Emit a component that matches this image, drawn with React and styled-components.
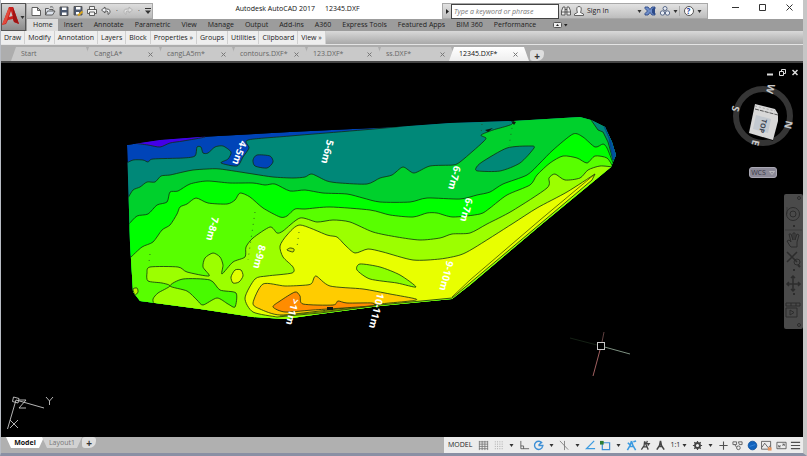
import React from "react";
import styled, { createGlobalStyle } from "styled-components";

const GlobalStyle = createGlobalStyle`
  * {
    box-sizing: border-box;
  }
  body {
    margin: 0;
    font-family: "Open Sans", "Noto Sans", sans-serif;
    font-size: 7px;
    line-height: 10px;
    color: #222222;
    background: #ffffff;
  }
  button, input {
    font: inherit;
    color: inherit;
    margin: 0;
    padding: 0;
    border: none;
    background: none;
  }
  svg {
    display: block;
    flex: none;
  }
`;

const icons = {
  new: <path d="M2 2.500H7.500L10.500 5.500V10.500H2ZM7.500 2.500V5.500H10.500" fill="#fff" />,
  open: <path d="M1.500 10V3.500H4.500L5.500 4.500H9V6M1.500 10L3.500 6H11L8.500 10ZM6 2Q8.500 1 9.500 3" fill="#dde3ec" />,
  save: (
    <>
      <path d="M2 2H10V10.500H2Z" fill="#4b5870" />
      <path d="M4 2.500H8.500V5H4ZM4 7.500H8.500V10H4Z" fill="#fff" stroke="none" />
    </>
  ),
  saveAs: (
    <>
      <path d="M2 1.500H10V10H2Z" fill="#4b5870" />
      <path d="M4 2H8.500V4.500H4ZM4 7H7V9.500H4Z" fill="#fff" stroke="none" />
      <path d="M6 10.500L10.500 6.500" stroke="#d9a520" strokeWidth="2" />
    </>
  ),
  print: <path d="M3.500 4.500V1.500H8.500V4.500M3 8.500H1.500V4.500H10.500V8.500H9M3.500 7H8.500V10.500H3.500Z" fill="#f4f4f4" />,
  undo: <path d="M5 2L1.500 5L5 8V6H7Q8.500 6.500 8 9.500Q11 8 10 5.500Q9 4 7 4H5Z" fill="#eef0f4" />,
  redo: <path d="M7 2L10.500 5L7 8V6H5Q3.500 6.500 4 9.500Q1 8 2 5.500Q3 4 5 4H7Z" fill="#dedede" stroke="#b0b0b0" />,
  find: <path d="M1.500 10V6L3 2H5V10ZM10.500 10V6L9 2H7V10ZM5 4.500H7M5 7H7M1.500 7H5M7 7H10.500" fill="#eee" />,
  user: <path d="M4 6Q3 1.500 6 1.500Q9 1.500 8 6L7.500 7.500L10.500 9V10.500H1.500V9L4.500 7.500Z" fill="#f7f7f7" stroke="#555" />,
  exchange: (
    <>
      <path d="M1 2H4L6 4.500L8 2H11V3.500L8.500 6L11 8.500V10H8L6 7.500L4 10H1V8.500L3.500 6L1 3.500Z" fill="#6d8cc8" stroke="#2c4a88" />
      <path d="M8 4L11 2V10L8 8Z" fill="#2c4a88" stroke="none" />
    </>
  ),
  connect: (
    <g fill="#e8ecf4" stroke="#4c5d80">
      <circle cx="6" cy="3.500" r="2" />
      <circle cx="3.500" cy="8" r="2.200" />
      <circle cx="8.500" cy="8" r="2.200" />
    </g>
  ),
  grid: <path d="M1.500 1V11M4.500 1V11M7.500 1V11M10.500 1V11M1 2H11M1 4.500H11M1 7H11M1 9.500H11" stroke="#777" />,
  snap: <path d="M2 2H11M2 4.500H11M2 7H11M2 9.500H11" stroke="#999" strokeDasharray="1 1.500" />,
  ortho: <path d="M2 1V9.500H11M2 6.500H5V9.500" />,
  polar: <path d="M10 3.500A4.500 4.500 0 1 0 10.500 7M6 6H11.500M6 6L9.500 2" stroke="#3c8fd6" strokeWidth="1.500" />,
  iso: <path d="M1 1L10 10.500M6 1V11" stroke="#777" />,
  track: <path d="M10 1L1.500 9.500H11" stroke="#3c9be0" strokeWidth="1.400" />,
  osnap: (
    <>
      <path d="M2.500 3H10.500V10.500H2.500Z" stroke="#3c8fd6" strokeWidth="1.300" />
      <path d="M0 1H4V5H0Z" fill="#2e7d32" stroke="none" />
    </>
  ),
  annoBlue: <path d="M6 1L4.500 6L1.500 11M6 1L7.500 6L10.500 11M4 7H8M8 2L11 1M2 3L5 6" stroke="#3c9be0" strokeWidth="1.700" />,
  annoAuto: <path d="M5 1.500L4.500 6L1.500 10.500M5 1.500L7 6L9 10.500M3 7.500H8M8 1L7 4H10L8.500 6" stroke="#444" strokeWidth="1.400" />,
  anno: <path d="M6 1L5 6L2 10.500M6 1L7 6L10 10.500M4 7H8" stroke="#444" strokeWidth="1.700" />,
  gear: (
    <>
      <circle cx="6" cy="6" r="2.700" stroke="#444" strokeWidth="2" />
      <path d="M6 1V3M6 9V11M1 6H3M9 6H11M2.500 2.500L4 4M8 8L9.500 9.500M9.500 2.500L8 4M4 8L2.500 9.500" stroke="#444" strokeWidth="1.300" />
    </>
  ),
  plus: <path d="M6 1.500V10.500M1.500 6H10.500" strokeWidth="1.200" />,
  isolate: <path d="M1 2H5V5H1ZM7 2H11V5H8ZM5 8.500A2 2 0 1 0 9 8.500A2 2 0 1 0 5 8.500M3 5L5 8" />,
  hardware: (
    <>
      <circle cx="6" cy="6" r="4.700" fill="#1163bd" stroke="#0c4f9a" />
      <path d="M3 7L9 5" stroke="#3a8ae0" />
    </>
  ),
  graphics: (
    <>
      <path d="M.500 1.500H10.500V10H.500ZM1 8L4 3.500L8 8.500L10 6" />
      <path d="M7.500 8H11.500V11.500H7.500Z" fill="#e8935c" stroke="none" />
    </>
  ),
  clean: <path d="M1 2.500H11V9.500H1ZM3 7.500L5 6M9 4.500L7 6M3 5.500V7.500H5M7 4.500H9V6.500" />,
  menu: <path d="M1 2.500H11M1 6H11M1 9.500H11" strokeWidth="1.300" />,
};

const Icon = ({ name, size = 12 }) => (
  <svg width={size} height={size} viewBox="0 0 12 12" fill="none" stroke="#505050" strokeWidth="0.900" aria-hidden="true">
    {icons[name]}
  </svg>
);

const Caret = () => (
  <svg width="5" height="3" viewBox="0 0 5 3" aria-hidden="true">
    <path d="M.500 0H4.500L2.500 3Z" fill="#333" />
  </svg>
);

const ribbonTabs = [
  "Home", "Insert", "Annotate", "Parametric", "View", "Manage", "Output", "Add-ins",
  "A360", "Express Tools", "Featured Apps", "BIM 360", "Performance",
];
const panels = [
  "Draw", "Modify", "Annotation", "Layers", "Block", "Properties »", "Groups",
  "Utilities", "Clipboard", "View »",
];
const drawings = ["Start", "CangLA*", "cangLA5m*", "contours.DXF*", "123.DXF*", "ss.DXF*", "12345.DXF*"];

// Catmull-Rom spline through a flat list "x,y x,y ..."
const curve = (text, closed) => {
  const pts = text.trim().split(/\s+/).map((p) => p.split(",").map(Number));
  const n = pts.length;
  const at = (i) => (closed ? pts[(i + n) % n] : pts[Math.max(0, Math.min(n - 1, i))]);
  let d = `M${pts[0]}`;
  for (let i = 0; i < (closed ? n : n - 1); i++) {
    const [a, b, c, e] = [at(i - 1), at(i), at(i + 1), at(i + 2)];
    const c1 = [b[0] + (c[0] - a[0]) / 8, b[1] + (c[1] - a[1]) / 8];
    const c2 = [c[0] - (e[0] - b[0]) / 8, c[1] - (e[1] - b[1]) / 8];
    d += `C${c1} ${c2} ${c}`;
  }
  return closed ? d + "Z" : d;
};

const outline =
  "M127 145L160 140L200 137L290 132L395 127L450 123L513 121L580 117L591 120L605 127L612 142L616 155L611 167L542 224L470 285L452 299L380 306L320 314L285 319L253 317L200 309L140 301L133 292L130 243Z";

// each band runs from its upper contour down to the bottom of the survey
const bands = [
  {
    fill: "#008878",
    end: "L640 100L640 340L120 340Z",
    pts: "125,164 133,160 143,160 148,162 153,159 183,158 195,156 197,147 201,147 203,153 208,153 215,147 223,146 231,152 228,159 221,163 237,166 243,157 249,148 248,140 290,136 395,127 460,118",
  },
  {
    fill: "#00d02c",
    end: "L640 110L640 340L120 340Z",
    pts: "128,198 133,190 140,187 147,182 155,182 161,176 170,175 183,172 193,170 207,169 220,169 253,174 273,177 293,178 305,177 312,174 327,181 340,183 367,184 380,178 392,175 403,167 414,173 430,166 453,165 460,162 473,151 483,142 486,138 481,135 493,130 507,126 513,123 516,112",
  },
  {
    fill: "#00ff00",
    end: "L640 170L640 340L120 340Z",
    pts: "129,224 137,216 148,214 157,205 167,202 170,192 178,191 190,184 207,181 230,183 253,183 265,185 275,184 290,191 305,190 323,193 347,194 363,198 380,202 410,202 427,198 460,199 477,195 490,192 503,184 527,175 540,163 553,150 573,134 583,137 595,147 603,144 607,148 613,163",
  },
  {
    fill: "#58ff00",
    end: "L640 175L640 340L120 340Z",
    pts: "130,258 142,247 153,242 162,230 170,225 177,214 180,207 187,204 196,198 208,203 227,204 235,200 240,193 250,197 263,208 280,217 287,216 295,209 305,209 330,207 370,210 390,215 413,217 427,213 437,213 453,217 480,214 490,208 507,195 530,185 537,175 550,163 563,156 577,158 587,163 595,156 607,158 613,167",
  },
  {
    fill: "#9cff00",
    end: "L620 180L620 340L154 340Z",
    pts: "154,305 153,299 158,293 170,286 162,283 148,281 147,273 150,267 178,267 187,272 209,276 203,267 205,258 213,253 220,257 223,265 222,274 233,262 245,257 246,247 253,238 270,227 277,233 283,231 300,218 317,222 333,220 350,222 373,232 397,237 420,240 440,238 452,234 470,233 487,224 512,211 547,188 549,178 555,174 565,180 580,178 588,170 600,166 613,167",
  },
  {
    fill: "#e8ff00",
    end: "L592 180L540 224L470 283L452 298L380 305L320 313L277 317Z",
    pts: "277,317 253,312 245,298 255,279 267,276 292,273 293,267 283,257 280,246 287,235 300,225 327,235 337,237 345,245 355,253 368,249 383,252 413,260 440,259 460,255 474,248 512,224 537,208 567,192 595,174",
  },
];

const islands = [
  ["#4400e8", "135,143 145,141 197,136 205,137 183,141 170,143 160,147 148,145"],
  ["#0044b8", "253,160 257,155 270,156 273,162 267,168 255,166"],
  ["#008878", "476,168 482,162 507,148 530,146 534,148 520,163 500,171 478,171"],
  ["#48fa00", "170,286 183,279 210,280 220,290 236,293 235,307 228,304 217,298 203,305 197,300 187,291"],
  ["#b8f000", "133,289 137,288 138,292 135,295"],
  ["#e0ff00", "231,277 235,270 241,270 243,276 239,282 233,283"],
  ["#8cff00", "357,270 360,264 380,267 400,275 416,287 397,283 370,279"],
  ["#ffcc00", "253,303 263,284 285,286 307,285 312,283 316,276 330,286 363,289 390,294 416,299 410,301 380,304 320,311 280,315 260,309"],
  ["#ff8c00", "273,307 280,301 295,292 300,296 303,304 333,305 338,301 347,303 372,303 370,306 313,310 285,312"],
  ["#d8e800", "287,250 290,248 294,249 293,252"],
];

const labels = [
  ["4-5m", 240, 153, 110],
  ["5-6m", 328, 152, 104],
  ["6-7m", 455, 178, 104],
  ["6-7m", 467, 210, 104],
  ["7-8m", 213, 229, 104],
  ["8-9m", 260, 257, 104],
  ["9-10m", 447, 276, 104],
  ["10-11m", 377, 311, 104],
  [">11m", 293, 312, 104],
];

const ContourMap = () => (
  <MapSvg viewBox="1 63 802 374" preserveAspectRatio="xMinYMin meet" role="img" aria-label="Depth contours">
    <clipPath id="survey">
      <path d={outline} />
    </clipPath>
    <g clipPath="url(#survey)" strokeWidth="0.800">
      <path d={outline} fill="#0044b8" />
      {bands.map((band) => (
        <path key={band.fill} d={curve(band.pts) + band.end} fill={band.fill} stroke="#103010" />
      ))}
      <path d="M589 117L598 130L603 132L608 142L613 160L620 155L606 120Z" fill="#008878" stroke="#103010" />
      <path d="M603 124L609 138L613 160L620 158L610 128Z" fill="#0050a0" stroke="#00408c" />
      {islands.map(([fill, pts]) => (
        <path key={pts} d={curve(pts, true)} fill={fill} stroke="#103010" />
      ))}
      <path d="M595 174L540 220L470 280L452 297M380 305L320 312L280 316" fill="none" stroke="#405000" />
      <path d="M513 122L509 146M482 124L481 134M255 212L248 260M299 232L297 247M150 254L149 262" stroke="#205020" strokeDasharray="1 5" />
      <path d="M327 307H333V310H327ZM485 130L493 128L488 132ZM511 121L516 122L514 125Z" fill="#101810" />
    </g>
    {labels.map(([text, x, y, angle]) => (
      <MapLabel key={`${text}${y}`} x={x} y={y} transform={`rotate(${angle} ${x} ${y})`}>
        {text}
      </MapLabel>
    ))}
    <g fill="none" stroke="#c8c8c8">
      <rect x="597.500" y="342.500" width="7" height="7" />
      <path d="M604.500 347L630 354" stroke="#7d9080" />
      <path d="M600 350L593 376" stroke="#a06060" />
      <path d="M602 342L604 332" stroke="#604040" />
      <path d="M570 338L597 345" stroke="#142014" />
    </g>
    <g fill="none" stroke="#c8c8c8" strokeWidth="0.900">
      <path d="M13.500 397L19 398.500L18 403L12.500 401.500ZM16 400L44 408M16 400L7.500 429" />
      <path d="M46 397L49.500 401L53 397M49.500 401V405M10 420L18 428M18 420L10 428M19 400H26L19 408H26" />
    </g>
  </MapSvg>
);

const ViewCube = () => (
  <svg width="66" height="72" viewBox="730 82 66 72" role="img" aria-label="View cube, top">
    <circle cx="763" cy="116" r="27" fill="none" stroke="#353535" strokeWidth="6" />
    <path d="M756 104L778 112L773 141L748 133Z" fill="#090909" />
    <path d="M755 104L775 109L778 114L778 121L773 140L749 133Z" fill="#d8d8d8" />
    <path d="M755 109L778 115" stroke="#555" strokeDasharray="4 1" />
    <path d="M755 106L775 111" stroke="#aaa" strokeDasharray="2 2" />
    <path d="M756 115L771 119L768 133L753 129Z" fill="#c3c9d0" />
    <CubeText x="763" y="126" transform="rotate(104 763 126)" $small>TOP</CubeText>
    <CubeText x="771" y="89" transform="rotate(104 771 89)">W</CubeText>
    <CubeText x="736" y="109" transform="rotate(104 736 109)">S</CubeText>
    <CubeText x="789" y="125" transform="rotate(104 789 125)">N</CubeText>
    <CubeText x="756" y="143" transform="rotate(104 756 143)">E</CubeText>
  </svg>
);

const NavigationBar = () => (
  <NavBar aria-label="Navigation bar">
    <svg width="19" height="135" viewBox="0 0 19 135" fill="none" stroke="#2c2c2c" strokeWidth="1">
      <circle cx="15" cy="4" r="1.500" />
      <circle cx="9" cy="20" r="6.500" />
      <circle cx="9" cy="20" r="3" />
      <path d="M3 13V20M1 36H18" strokeOpacity=".5" />
      <path d="M9 32H11M9 76H11M9 100H11" strokeWidth="2" />
      <path d="M6 52L3 47L5 46L7 48L5 40L7 40L9 46V39H11V46L13 40L15 41L13 48V53H7Z" />
      <path d="M3 58L13 68M13 58L3 68" strokeWidth="1.500" />
      <circle cx="13" cy="68" r="3" />
      <path d="M14 71L16 73" strokeWidth="2" />
      <path d="M9 82V97M3 90H16M7 84L9 82L11 84M7 95L9 97L11 95M5 88L3 90L5 92M14 88L16 90L14 92" strokeWidth="1.500" />
      <path d="M2 109H16V112H2ZM2 114H13V123H2ZM6 116L10 118.500L6 121ZM7 109V112M12 109V112" />
      <circle cx="15" cy="131" r="1.500" />
    </svg>
  </NavBar>
);

const statusTools = [
  "grid", "snap", "v", "ortho", "polar", "v", "iso", "v", "track", "osnap", "v", "annoBlue", "annoAuto", "anno",
  "1:1", "gear", "v", "plus", "isolate", "hardware", "graphics", "clean", "menu",
];

const StatusItem = ({ name }) => {
  if (name === "v") {
    return <ToolButton $width={11} aria-label="Options"><Caret /></ToolButton>;
  }
  if (name === "1:1") {
    return <ToolButton $width={22} aria-label="Annotation scale">1:1 <Caret /></ToolButton>;
  }
  return <ToolButton $width={14} aria-label={name}><Icon name={name} size={11} /></ToolButton>;
};

export default function App() {
  return (
    <Shell>
      <GlobalStyle />
      <Header>
        <AppButton aria-label="Application menu">
          <svg width="18" height="22" viewBox="0 0 18 22" aria-hidden="true">
            <path d="M0 19L7 1H11L17 18L12 16L11 13L6 14L4 18Z" fill="#c9211e" />
            <path d="M7 11L9 5L10.500 10Z" fill="#c8c8c8" />
            <path d="M0 19L7 1L8 5L4 17Z" fill="#e24a3c" />
            <path d="M11 13L12 16L17 18L11 1Z" fill="#a01414" />
          </svg>
          <Caret />
        </AppButton>
        <HeaderRows>
          <TitleBar>
            <QuickAccess>
              {["new", "open", "save", "saveAs", "print", "undo"].map((name) => (
                <ToolButton key={name} $width={14} aria-label={name}><Icon name={name} /></ToolButton>
              ))}
              <ToolButton $width={8} aria-label="Undo list">·</ToolButton>
              <ToolButton $width={14} aria-label="redo"><Icon name="redo" /></ToolButton>
              <ToolButton $width={8} aria-label="Redo list">·</ToolButton>
              <ToolButton $width={10} aria-label="Customize">
                <svg width="6" height="6" viewBox="0 0 6 6"><path d="M0 0H6V1H0ZM0 2.500H6L3 6Z" fill="#333" /></svg>
              </ToolButton>
            </QuickAccess>
            <Title>
              <span>Autodesk AutoCAD 2017</span>
              <span>12345.DXF</span>
            </Title>
            <InfoCenter>
              <ToolButton $width={8} aria-label="Collapse search">
                <svg width="3" height="5" viewBox="0 0 3 5"><path d="M0 0L3 2.500L0 5Z" fill="#222" /></svg>
              </ToolButton>
              <Search type="text" placeholder="Type a keyword or phrase" aria-label="Search" />
              <ToolButton $width={14} aria-label="Find"><Icon name="find" /></ToolButton>
              <SignIn><Icon name="user" /> <span>Sign In</span> <Caret /></SignIn>
              <ToolButton $width={15} aria-label="Exchange"><Icon name="exchange" /></ToolButton>
              <ToolButton $width={22} aria-label="Stay connected"><Icon name="connect" /> <Caret /></ToolButton>
              <Help aria-label="Help"><HelpMark>?</HelpMark> <Caret /></Help>
            </InfoCenter>
            <WindowButtons>
              <button aria-label="Minimize"><svg width="7" height="7"><path d="M0 3.500H7" stroke="#333" /></svg></button>
              <button aria-label="Maximize"><svg width="7" height="7"><path d="M.500 .500H6.500V6.500H.500Z" fill="none" stroke="#333" /></svg></button>
              <button aria-label="Close"><svg width="7" height="7"><path d="M.500 .500L6.500 6.500M6.500 .500L.500 6.500" stroke="#333" /></svg></button>
            </WindowButtons>
          </TitleBar>
          <RibbonTabs>
            {ribbonTabs.map((tab) => (
              <RibbonTab key={tab} $active={tab === "Home"}>{tab}</RibbonTab>
            ))}
            <RibbonToggle aria-label="Minimize ribbon">
              <svg width="15" height="6" viewBox="0 0 15 6">
                <rect x=".500" y=".500" width="8" height="5" rx="1" fill="#eee" stroke="#555" />
                <path d="M3 4L4.500 2L6 4ZM11 2H14.500L12.800 4.500Z" fill="#222" />
              </svg>
            </RibbonToggle>
          </RibbonTabs>
        </HeaderRows>
      </Header>
      <PanelRow>
        {panels.map((panel) => (
          <PanelButton key={panel}>{panel}</PanelButton>
        ))}
      </PanelRow>
      <FileTabs>
        {drawings.map((name) => (
          <FileTab key={name} $active={name === "12345.DXF*"}>
            <span>{name}</span>
            {name !== "Start" && (
              <svg width="5" height="5" viewBox="0 0 5 5"><path d="M.500 .500L4.500 4.500M4.500 .500L.500 4.500" stroke="#777" /></svg>
            )}
          </FileTab>
        ))}
        <AddTab aria-label="New drawing" $gap={8}>+</AddTab>
      </FileTabs>
      <Canvas>
        <ContourMap />
        <Overlay>
          <DrawingButtons>
            <button aria-label="Minimize drawing"><svg width="6" height="7"><path d="M0 5.500H6" stroke="#ddd" strokeWidth="2" /></svg></button>
            <button aria-label="Restore drawing"><svg width="7" height="7"><path d="M2.500 2V.500H6.500V4.500H5M.500 2.500H4.500V6.500H.500Z" fill="none" stroke="#ddd" /></svg></button>
            <button aria-label="Close drawing"><svg width="6" height="7"><path d="M.500 1L5.500 6M5.500 1L.500 6" stroke="#ddd" strokeWidth="1.500" /></svg></button>
          </DrawingButtons>
          <CubeHolder>
            <ViewCube />
            <WcsButton>WCS <svg width="6" height="4"><path d="M.500 .500H5.500L3 3.500Z" fill="none" stroke="#ccc" strokeWidth=".7" /></svg></WcsButton>
          </CubeHolder>
          <NavigationBar />
        </Overlay>
      </Canvas>
      <Footer>
        <LayoutTabs>
          <LayoutTab $active>Model</LayoutTab>
          <LayoutTab>Layout1</LayoutTab>
          <AddTab aria-label="New layout" $gap={2}>+</AddTab>
        </LayoutTabs>
        <StatusBar>
          <ModelButton>MODEL</ModelButton>
          {statusTools.map((name, i) => (
            <StatusItem key={i} name={name} />
          ))}
        </StatusBar>
      </Footer>
    </Shell>
  );
}

const Shell = styled.div`
  min-height: 100vh;
  display: flex;
  flex-direction: column;
  border-left: 1px solid #b8bcc4;
  border-right: 4px solid #c6c6c6;
  border-bottom: 3px solid #8a90a4;
`;
const Header = styled.header`
  display: flex;
  background: #ffffff;
`;
const AppButton = styled.button`
  width: 25px;
  height: 28px;
  margin-top: 3px;
  display: flex;
  align-items: center;
  justify-content: center;
  border: 1px solid #555555;
  background: linear-gradient(#d4d4d4, #8c8c8c);
`;
const HeaderRows = styled.div`
  flex: 1;
  min-width: 0;
`;
const TitleBar = styled.div`
  height: 19px;
  display: flex;
  align-items: flex-end;
`;
const QuickAccess = styled.div`
  height: 16px;
  width: 127px;
  padding-left: 2px;
  display: flex;
  align-items: center;
  background: linear-gradient(#dedede, #b9b9b9);
  border: 1px solid #a8a8a8;
`;
const ToolButton = styled.button`
  width: ${({ $width }) => $width}px;
  height: 14px;
  flex: none;
  display: flex;
  align-items: center;
  justify-content: center;
  gap: 2px;
`;
const Title = styled.h1`
  flex: 1;
  height: 16px;
  margin: 0;
  display: flex;
  justify-content: center;
  gap: 10px;
  font-size: 7px;
  line-height: 12px;
  font-weight: 400;
  color: #111111;
  white-space: nowrap;
`;
const InfoCenter = styled.div`
  height: 16px;
  width: 266px;
  display: flex;
  align-items: center;
  background: linear-gradient(#e2e2e2, #bdbdbd);
  border: 1px solid #a8a8a8;
`;
const Search = styled.input`
  width: 108px;
  height: 15px;
  padding: 0 2px;
  border: 1px solid #444444;
  background: #ffffff;
  &::placeholder {
    color: #777777;
    font-style: italic;
    opacity: 1;
  }
`;
const SignIn = styled.button`
  width: 69px;
  display: flex;
  align-items: center;
  gap: 2px;
  span {
    flex: 1;
    text-align: left;
  }
`;
const Help = styled.button`
  width: 26px;
  display: flex;
  align-items: center;
  justify-content: center;
  gap: 3px;
  border-left: 1px solid #aaaaaa;
`;
const HelpMark = styled.span`
  width: 10px;
  height: 10px;
  border: 1px solid #555555;
  border-radius: 50%;
  background: #ffffff;
  color: #1c3f9a;
  font-size: 8px;
  line-height: 8px;
  font-weight: 700;
`;
const WindowButtons = styled.div`
  height: 16px;
  flex: none;
  display: flex;
  padding-left: 14px;
  button {
    width: 27px;
    height: 9px;
    display: flex;
    align-items: center;
    justify-content: center;
  }
`;
const RibbonTabs = styled.nav`
  height: 12px;
  padding-left: 1px;
  display: flex;
  background: #9c9c9c;
`;
const RibbonTab = styled.button`
  height: 12px;
  padding: 0 5px 0 6px;
  white-space: nowrap;
  background: ${({ $active }) => ($active ? "#dddddd" : "transparent")};
`;
const RibbonToggle = styled.button`
  margin-left: 12px;
`;
const PanelRow = styled.div`
  height: 13px;
  display: flex;
  align-items: stretch;
  background: linear-gradient(#d9d9d9, #a9a9a9);
`;
const PanelButton = styled.button`
  padding: 0 3px;
  white-space: nowrap;
  background: #eeeeee;
  border-right: 1px solid #d0d0d0;
`;
const FileTabs = styled.div`
  height: 19px;
  display: flex;
  padding: 2px 0 0 10px;
  background: #adadad;
  border-top: 1px solid #e4e4e4;
  border-bottom: 2px solid #444444;
`;
const FileTab = styled.button`
  width: 80px;
  margin-right: -7px;
  padding: 0 11px 0 10px;
  display: flex;
  align-items: center;
  justify-content: space-between;
  color: ${({ $active }) => ($active ? "#111111" : "#666666")};
  background: ${({ $active }) => ($active ? "linear-gradient(#ffffff, #eeeeee)" : "#c9c9c9")};
  clip-path: polygon(5px 0, calc(100% - 5px) 0, 100% 100%, 0 100%);
`;
const AddTab = styled.button`
  width: 14px;
  height: 11px;
  margin-left: ${({ $gap }) => $gap}px;
  align-self: ${({ $gap }) => ($gap > 4 ? "flex-end" : "flex-start")};
  border-radius: 3px 3px 7px 3px;
  background: #dedede;
  color: #333333;
  font-size: 10px;
  font-weight: 700;
`;
const Canvas = styled.main`
  flex: 1;
  position: relative;
  background: #000000;
`;
const MapSvg = styled.svg`
  width: 100%;
`;
const MapLabel = styled.text`
  fill: #ffffff;
  font-size: 10px;
  font-weight: 700;
  text-anchor: middle;
  dominant-baseline: central;
`;
const CubeText = styled.text`
  fill: ${({ $small }) => ($small ? "#3c4450" : "#c8c8c8")};
  font-size: ${({ $small }) => ($small ? 7 : 10)}px;
  font-weight: 700;
  text-anchor: middle;
  dominant-baseline: central;
`;
/* view controls float above the drawing area */
const Overlay = styled.div`
  position: absolute;
  top: 0;
  right: 0;
  display: flex;
  flex-direction: column;
  align-items: flex-end;
`;
const DrawingButtons = styled.div`
  height: 19px;
  padding: 6px 5px 0 0;
  display: flex;
  gap: 6px;
  button {
    display: flex;
  }
`;
const CubeHolder = styled.div`
  height: 112px;
  padding-right: 7px;
  display: flex;
  flex-direction: column;
  align-items: center;
  gap: 13px;
`;
const WcsButton = styled.button`
  width: 28px;
  height: 11px;
  display: flex;
  align-items: center;
  justify-content: center;
  gap: 3px;
  border-radius: 3px;
  background: #8c8a98;
  border: 1px solid #aaa8b4;
  color: #383844;
`;
const NavBar = styled.nav`
  width: 19px;
  border-radius: 2px;
  background: #4a4a4a;
`;
const Footer = styled.footer`
  height: 16px;
  display: flex;
  justify-content: space-between;
  background: #b0b0b0;
`;
const LayoutTabs = styled.div`
  display: flex;
  align-items: flex-start;
  padding-left: 5px;
`;
const LayoutTab = styled.button`
  width: ${({ $active }) => ($active ? 38 : 40)}px;
  height: 11px;
  margin-right: -2px;
  font-weight: ${({ $active }) => ($active ? 700 : 400)};
  color: ${({ $active }) => ($active ? "#111111" : "#777777")};
  background: ${({ $active }) => ($active ? "#ffffff" : "#d2d2d2")};
  clip-path: polygon(0 0, 100% 0, calc(100% - 5px) 100%, 5px 100%);
`;
const StatusBar = styled.div`
  width: 359px;
  display: flex;
  align-items: center;
  justify-content: space-between;
  background: #ececec;
`;
const ModelButton = styled.button`
  padding: 0 4px;
`;
